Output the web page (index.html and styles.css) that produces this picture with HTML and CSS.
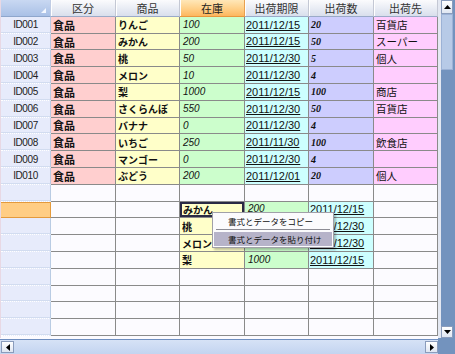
FILE: index.html
```html
<!DOCTYPE html>
<html lang="ja">
<head>
<meta charset="utf-8">
<link rel="stylesheet" href="styles.css">
</head>
<body>
<div class="app">
  <div class="main">
    <div class="sheet">
      <div class="corner-cell"><span class="tri"></span></div>
      <div class="ch">区分</div><div class="ch">商品</div><div class="ch sel">在庫</div><div class="ch">出荷期限</div><div class="ch">出荷数</div><div class="ch">出荷先</div>

      <div class="rh">ID001</div><div class="c k">食品</div><div class="c p">りんご</div><div class="c s">100</div><div class="c d">2011/12/15</div><div class="c q">20</div><div class="c t">百貨店</div>
      <div class="rh">ID002</div><div class="c k">食品</div><div class="c p">みかん</div><div class="c s">200</div><div class="c d">2011/12/15</div><div class="c q">50</div><div class="c t">スーパー</div>
      <div class="rh">ID003</div><div class="c k">食品</div><div class="c p">桃</div><div class="c s">50</div><div class="c d">2011/12/30</div><div class="c q">5</div><div class="c t">個人</div>
      <div class="rh">ID004</div><div class="c k">食品</div><div class="c p">メロン</div><div class="c s">10</div><div class="c d">2011/12/30</div><div class="c q">4</div><div class="c t"></div>
      <div class="rh">ID005</div><div class="c k">食品</div><div class="c p">梨</div><div class="c s">1000</div><div class="c d">2011/12/15</div><div class="c q">100</div><div class="c t">商店</div>
      <div class="rh">ID006</div><div class="c k">食品</div><div class="c p">さくらんぼ</div><div class="c s">550</div><div class="c d">2011/12/30</div><div class="c q">50</div><div class="c t">百貨店</div>
      <div class="rh">ID007</div><div class="c k">食品</div><div class="c p">バナナ</div><div class="c s">0</div><div class="c d">2011/12/30</div><div class="c q">4</div><div class="c t"></div>
      <div class="rh">ID008</div><div class="c k">食品</div><div class="c p">いちご</div><div class="c s">250</div><div class="c d">2011/11/30</div><div class="c q">100</div><div class="c t">飲食店</div>
      <div class="rh">ID009</div><div class="c k">食品</div><div class="c p">マンゴー</div><div class="c s">0</div><div class="c d">2011/12/30</div><div class="c q">4</div><div class="c t"></div>
      <div class="rh">ID010</div><div class="c k">食品</div><div class="c p">ぶどう</div><div class="c s">200</div><div class="c d">2011/12/01</div><div class="c q">20</div><div class="c t">個人</div>

      <div class="rh"></div><div class="c"></div><div class="c"></div><div class="c"></div><div class="c"></div><div class="c"></div><div class="c"></div>
      <div class="rh act"></div><div class="c"></div><div class="c"></div><div class="c p cur">みかん</div><div class="c s top">200</div><div class="c d">2011/12/15</div><div class="c"></div>
      <div class="rh"></div><div class="c"></div><div class="c"></div><div class="c p">桃</div><div class="c s"></div><div class="c d">2011/12/30</div><div class="c"></div>
      <div class="rh"></div><div class="c"></div><div class="c"></div><div class="c p">メロン</div><div class="c s"></div><div class="c d">2011/12/30</div><div class="c"></div>
      <div class="rh"></div><div class="c"></div><div class="c"></div><div class="c p">梨</div><div class="c s">1000</div><div class="c d">2011/12/15</div><div class="c"></div>
      <div class="rh"></div><div class="c"></div><div class="c"></div><div class="c"></div><div class="c"></div><div class="c"></div><div class="c"></div>
      <div class="rh"></div><div class="c"></div><div class="c"></div><div class="c"></div><div class="c"></div><div class="c"></div><div class="c"></div>
      <div class="rh"></div><div class="c"></div><div class="c"></div><div class="c"></div><div class="c"></div><div class="c"></div><div class="c"></div>
      <div class="rh"></div><div class="c"></div><div class="c"></div><div class="c"></div><div class="c"></div><div class="c"></div><div class="c"></div>

      <div class="menu">
        <div class="mi">書式とデータをコピー</div>
        <div class="msep"></div>
        <div class="mi hl">書式とデータを貼り付け</div>
      </div>
    </div>
    <div class="vscroll">
      <div class="sbtn vb"><svg width="7" height="4" viewBox="0 0 7 4"><path d="M0 4 L3.5 0 L7 4 Z" fill="#000"/></svg></div>
      <div class="thumb"></div>
      <div class="vtrack"></div>
      <div class="sbtn vb"><svg width="7" height="4" viewBox="0 0 7 4"><path d="M0 0 L7 0 L3.5 4 Z" fill="#000"/></svg></div>
    </div>
  </div>
  <div class="hscroll">
    <div class="hbar">
      <div class="sbtn hb"><svg width="4" height="7" viewBox="0 0 4 7"><path d="M4 0 L4 7 L0 3.5 Z" fill="#000"/></svg></div>
      <div class="htrack"></div>
      <div class="sbtn hb"><svg width="4" height="7" viewBox="0 0 4 7"><path d="M0 0 L4 3.5 L0 7 Z" fill="#000"/></svg></div>
    </div>
    <div class="corner"></div>
  </div>
</div>
</body>
</html>
```

FILE: styles.css
```css
* { box-sizing: border-box; }
html, body { margin: 0; padding: 0; background: #ffffff; }
body { font-family: "Noto Sans CJK JP", "Liberation Sans", sans-serif; color: #111; }

.app { width: 455px; height: 354px; display: flex; flex-direction: column; overflow: hidden; background: #fcfbff; }
.main { display: flex; height: 338px; }

.sheet {
  position: relative;
  width: 438px;
  height: 338px;
  display: grid;
  grid-template-columns: 50px 65px 64px 65px 64px 65px 64px;
  grid-auto-rows: 16.8px;
  align-content: start;
  background: #fcfbff;
  border-left: 1px solid #e8d8e4;
}

.corner-cell {
  position: relative;
  background: linear-gradient(#c9d8f2, #a9c0e6);
  border-right: 1px solid #c0cce4;
  border-bottom: 1px solid #8ea6cc;
}
.corner-cell .tri {
  position: absolute; right: 4px; bottom: 3px;
  width: 0; height: 0;
  border-left: 5px solid transparent;
  border-bottom: 5px solid #f4f8ff;
}

.ch {
  display: flex; align-items: center; justify-content: center;
  font-size: 11px; color: #333;
  background: linear-gradient(#fbfbfd, #e6eaf3 60%, #d9dfec);
  border-right: 1px solid #c4c8d4;
  border-bottom: 1px solid #9aaac8;
  box-shadow: inset 1px 0 0 #ffffff;
}
.ch.sel {
  background: linear-gradient(#ffe7b8, #ffcf87 55%, #fdb65e);
  border-right: 1px solid #e8a050;
  border-bottom: 1px solid #e8963c;
  color: #222;
}

.rh {
  display: flex; align-items: center; justify-content: center;
  font-family: "Liberation Sans", sans-serif;
  font-size: 10px; letter-spacing: -0.4px; color: #222;
  background: #e7ebfb;
  border-right: 1px solid #b9cbe3;
  border-bottom: 1px dotted #ffffff;
  box-shadow: inset 0 -1px 0 #d2dcf0;
}
.rh.act {
  background: #ffcd84;
  border-right: 1px solid #e49a3c;
  border-bottom: 1px solid #e49a3c;
  box-shadow: inset 0 1px 0 #e49a3c;
}

.c {
  display: flex; align-items: center;
  padding-left: 2px;
  white-space: nowrap; overflow: hidden;
  background: #fcfbff;
  border-right: 1px solid #8a8a8a;
  border-bottom: 1px solid #8a8a8a;
  font-size: 11px;
}
.c.k { background: #ffcfcf; font-weight: bold; font-size: 11px; }
.c.p { background: #ffffc9; font-weight: bold; font-size: 10px; }
.c.s { background: #ccfecc; font-family: "Liberation Sans", sans-serif; font-style: italic; font-size: 10px; padding-left: 3px; }
.c.s.top { align-items: flex-start; padding-top: 1px; }
.c.d { background: #cdffff; font-family: "Liberation Sans", sans-serif; font-size: 11px; text-decoration: underline; padding-left: 1px; }
.c.q { background: #cdcdfe; font-family: "Liberation Serif", serif; font-style: italic; font-weight: bold; font-size: 10px; }
.c.t { background: #ffcdfe; font-size: 10.5px; }
.c.cur { box-shadow: inset 0 0 0 2px #2a2a44; padding-left: 3px; }

.menu {
  position: absolute; left: 211px; top: 212px;
  width: 122px; height: 36px;
  background: #fbfbfd;
  border: 1px solid #a0a0a8;
  box-shadow: 2px 2px 2px rgba(0,0,0,0.25);
  display: flex; flex-direction: column;
  padding: 1px;
}
.mi {
  height: 15px; display: flex; align-items: center;
  padding-left: 14px;
  font-size: 8.5px; color: #111; white-space: nowrap;
}
.msep { height: 1px; margin: 1px 2px 2px; background: #8c8c94; }
.mi.hl { background: #b6b3c9; }

.vscroll {
  width: 17px; height: 338px;
  background: #7393be;
  display: flex; flex-direction: column; align-items: flex-start;
  border-left: 3px solid #e4e8f2;
}
.sbtn {
  display: flex; align-items: center; justify-content: center;
  background: linear-gradient(#ffffff, #dfe6f2);
  border: 1px solid #8a9cbc;
}
.vb { width: 12px; height: 14px; }
.thumb { width: 12px; height: 56px; background: #b7cae7; border: 1px solid #9cb2d6; }
.vtrack { flex: 1; }
.vscroll .vb:last-child { height: 12px; }

.hscroll { display: flex; height: 16px; }
.hbar {
  flex: 1; display: flex; align-items: center;
  background: linear-gradient(#d6e2f6, #c3d4f0);
  border-top: 1px solid #6f8ec0;
  margin-top: 1px;
  padding: 0 0 0 1px;
}
.hb { width: 13px; height: 12px; }
.htrack { flex: 1; height: 12px; }
.corner { width: 17px; background: #7393be; }
```
